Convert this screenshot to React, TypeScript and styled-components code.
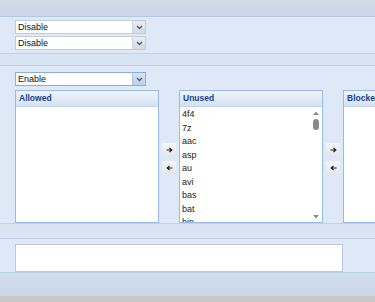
import React from 'react';
import styled, { createGlobalStyle } from 'styled-components';

const GlobalStyle = createGlobalStyle`
    html, body {
        margin: 0;
        padding: 0;
        width: 375px;
        height: 302px;
        overflow: hidden;
        background: #dfe8f6;
        font-family: "Liberation Sans", Arial, sans-serif;
    }
`;

const Page = styled.div`
    display: flex;
    flex-direction: column;
    width: 375px;
    height: 302px;
    overflow: hidden;
    background: #dfe8f6;
`;

const TopBar = styled.div`
    height: 16px;
    background: linear-gradient(#d1dbe8, #c9d6e6);
    border-bottom: 1px solid #b3c7de;
`;

const Section = styled.div<{ pad?: string }>`
    display: flex;
    flex-direction: column;
    gap: 2px;
    padding: ${(p) => p.pad || '3px 15px'};
`;

const Band = styled.div<{ h: number }>`
    height: ${(p) => p.h}px;
    background: #d9e4f2;
    border-top: 1px solid #c3d3e6;
    border-bottom: 1px solid #c3d3e6;
`;

const Select = styled.div<{ focused?: boolean }>`
    display: flex;
    width: 129px;
    height: 12px;
    border: 1px solid ${(p) => (p.focused ? '#8bb0d6' : '#c4cbd6')};
    background: #ffffff;
`;

const SelectText = styled.span`
    flex: 1;
    font-size: 9px;
    line-height: 12px;
    padding-left: 2px;
    color: #111;
`;

const Trigger = styled.div<{ focused?: boolean }>`
    width: 12px;
    display: flex;
    align-items: center;
    justify-content: center;
    background: ${(p) => (p.focused ? 'linear-gradient(#d6e4f4, #bcd0ea)' : 'linear-gradient(#e8ecf1, #d5dbe3)')};
    border-left: 1px solid ${(p) => (p.focused ? '#a8c2e0' : '#d0d6de')};
`;

const ListsRow = styled.div`
    display: flex;
    align-items: stretch;
    margin-top: 2px;
    height: 133px;
`;

const ListBox = styled.div`
    display: flex;
    flex-direction: column;
    flex: 0 0 144px;
    box-sizing: border-box;
    border: 1px solid #99bbe8;
    background: #ffffff;
    overflow: hidden;
`;

const ListHeader = styled.div`
    height: 15px;
    line-height: 15px;
    padding-left: 3px;
    font-size: 8.5px;
    font-weight: bold;
    color: #15428b;
    background: linear-gradient(#eef4fb, #d5e2f2);
    border-bottom: 1px solid #c1d4ec;
`;

const ListBody = styled.div`
    position: relative;
    flex: 1;
    overflow: hidden;
`;

const Items = styled.div`
    padding: 1px 0 0 2px;
`;

const Item = styled.div`
    height: 13.5px;
    line-height: 13.5px;
    font-size: 9px;
    color: #222;
`;

const ScrollTrack = styled.div`
    position: absolute;
    top: 0;
    right: 0;
    bottom: 0;
    width: 13px;
    display: flex;
    flex-direction: column;
    align-items: center;
`;

const ScrollArrow = styled.div`
    height: 11px;
    display: flex;
    align-items: center;
    justify-content: center;
`;

const Thumb = styled.div`
    width: 6px;
    height: 11px;
    border-radius: 3px;
    background: #8a8a8a;
    margin-top: 1px;
`;

const Spacer = styled.div`
    flex: 1;
`;

const MoveButtons = styled.div`
    flex: 0 0 20px;
    display: flex;
    flex-direction: column;
    align-items: center;
    justify-content: center;
    gap: 5px;
    padding-top: 4px;
`;

const MoveButton = styled.div`
    width: 14px;
    height: 13px;
    display: flex;
    align-items: center;
    justify-content: center;
    background: linear-gradient(#f4f6f8, #e3e7ec);
    border-radius: 1px;
`;

const TextArea = styled.div`
    width: 326px;
    height: 26px;
    border: 1px solid #b9c9de;
    background: #ffffff;
`;

const Bottom = styled.div`
    flex: 1;
    background: linear-gradient(#d3deec, #c9d6e6);
    border-top: 1px solid #b8cbe2;
    border-bottom: 6px solid #c8c8c8;
`;

const Chevron = () => (
    <svg width="7" height="5" viewBox="0 0 7 5">
        <path d="M1 1 L3.5 3.5 L6 1" stroke="#4a5a70" strokeWidth="1.3" fill="none" />
    </svg>
);

const Arrow = ({ dir }: { dir: 'right' | 'left' }) => (
    <svg width="7" height="6" viewBox="0 0 7 6" style={{ transform: dir === 'left' ? 'scaleX(-1)' : undefined }}>
        <path d="M0.5 3 H5 M3.5 1 L5.8 3 L3.5 5" stroke="#222" strokeWidth="1.2" fill="none" />
    </svg>
);

const Caret = ({ up }: { up?: boolean }) => (
    <svg width="6" height="4" viewBox="0 0 6 4">
        <path d={up ? 'M0 4 L3 0.5 L6 4 Z' : 'M0 0 L3 3.5 L6 0 Z'} fill="#8c8c8c" />
    </svg>
);

const DropDown = ({ value, focused }: { value: string; focused?: boolean }) => (
    <Select focused={focused}>
        <SelectText>{value}</SelectText>
        <Trigger focused={focused}>
            <Chevron />
        </Trigger>
    </Select>
);

const unused = ['4f4', '7z', 'aac', 'asp', 'au', 'avi', 'bas', 'bat', 'bin', 'bmp'];

const Movers = () => (
    <MoveButtons>
        <MoveButton><Arrow dir="right" /></MoveButton>
        <MoveButton><Arrow dir="left" /></MoveButton>
    </MoveButtons>
);

const App = () => {
    return (
        <Page>
            <GlobalStyle />
            <TopBar />
            <Section pad="3px 15px 3px">
                <DropDown value="Disable" />
                <DropDown value="Disable" />
            </Section>
            <Band h={11} />
            <Section pad="6px 15px 0">
                <DropDown value="Enable" focused />
                <ListsRow>
                    <ListBox>
                        <ListHeader>Allowed</ListHeader>
                        <ListBody />
                    </ListBox>
                    <Movers />
                    <ListBox>
                        <ListHeader>Unused</ListHeader>
                        <ListBody>
                            <Items>
                                {unused.map((ext) => <Item key={ext}>{ext}</Item>)}
                            </Items>
                            <ScrollTrack>
                                <ScrollArrow><Caret up /></ScrollArrow>
                                <Thumb />
                                <Spacer />
                                <ScrollArrow><Caret /></ScrollArrow>
                            </ScrollTrack>
                        </ListBody>
                    </ListBox>
                    <Movers />
                    <ListBox>
                        <ListHeader>Blocked</ListHeader>
                        <ListBody />
                    </ListBox>
                </ListsRow>
            </Section>
            <Band h={14} />
            <Section pad="5px 15px 0">
                <TextArea />
            </Section>
            <Bottom />
        </Page>
    );
};

export default App;
